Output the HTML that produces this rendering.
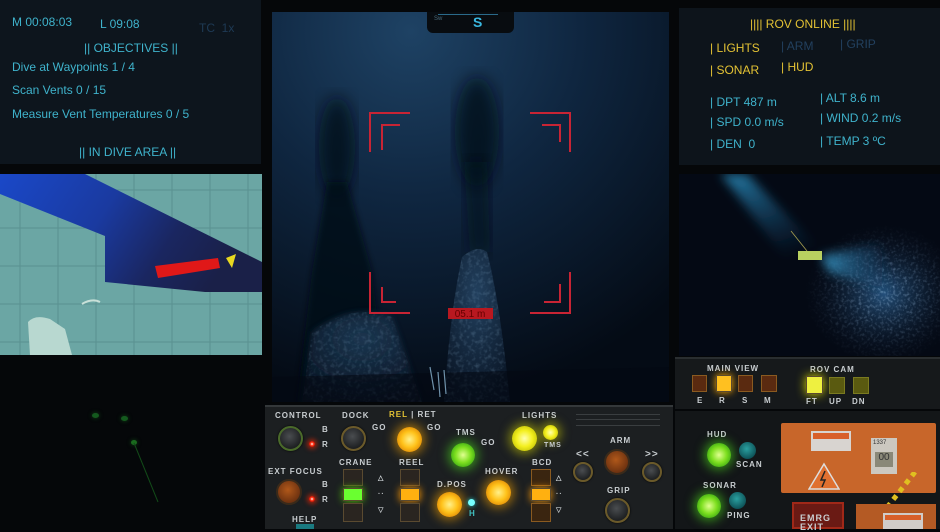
<!DOCTYPE html>
<html><head><meta charset="utf-8"><style>
*{margin:0;padding:0;box-sizing:border-box}
body{width:940px;height:529px;background:#050709;position:relative;overflow:hidden;font-family:"Liberation Sans",sans-serif}
.a{position:absolute;white-space:nowrap}
.c{color:#3fb3cc;font-size:12px}
.y{color:#e3c234;font-size:12px}
.d{color:#22405e;font-size:12px}
.l{color:#c8cdd0;font-size:8px;font-weight:bold;letter-spacing:1px}
.k{position:absolute;border-radius:50%}
.knob{background:radial-gradient(circle at 45% 40%,#4a4d50,#1e2022 70%);border:2px solid #6b5a2a;box-shadow:0 0 2px #000}
.org{background:radial-gradient(circle,#fff08a 0,#ffc21a 45%,#d87a00 90%);box-shadow:0 0 10px 3px rgba(255,170,0,.55)}
.yel{background:radial-gradient(circle,#ffffb0 0,#f4f020 45%,#b8b800 90%);box-shadow:0 0 10px 3px rgba(230,230,0,.5)}
.grn{background:radial-gradient(circle,#e0ff90 0,#7ee020 45%,#2a9a10 90%);box-shadow:0 0 10px 3px rgba(80,230,30,.55)}
.brn{background:radial-gradient(circle at 45% 40%,#b0581a,#6a3010 75%);border:2px solid #3a2a1a}
.tel{background:radial-gradient(circle at 45% 40%,#2aa0a0,#0b4a50 80%)}
.red{background:radial-gradient(circle,#fff,#ff3010 40%,#a00 90%);box-shadow:0 0 5px 2px rgba(255,40,0,.6)}
.sq{position:absolute;border:1px solid #5a4a30;background:#2a2520}
</style></head><body>

<div class="a" style="left:0;top:0;width:261px;height:164px;background:#0d151d"></div>
<div class="a c" style="left:12px;top:15px">M 00:08:03</div>
<div class="a c" style="left:100px;top:17px">L 09:08</div>
<div class="a d" style="left:199px;top:21px;color:#1e3a55">TC &nbsp;1x</div>
<div class="a c" style="left:84px;top:41px">|| OBJECTIVES ||</div>
<div class="a c" style="left:12px;top:60px">Dive at Waypoints 1 / 4</div>
<div class="a c" style="left:12px;top:83px">Scan Vents 0 / 15</div>
<div class="a c" style="left:12px;top:107px">Measure Vent Temperatures 0 / 5</div>
<div class="a c" style="left:79px;top:145px">|| IN DIVE AREA ||</div>

<svg class="a" style="left:0;top:174px" width="262" height="181">
<rect width="262" height="181" fill="#6ba6a4"/>
<g stroke="#5a9090" stroke-width="1">
<line x1="20" y1="0" x2="20" y2="181"/><line x1="58" y1="0" x2="58" y2="181"/><line x1="96" y1="0" x2="96" y2="181"/><line x1="134" y1="0" x2="134" y2="181"/><line x1="172" y1="0" x2="172" y2="181"/><line x1="210" y1="0" x2="210" y2="181"/><line x1="248" y1="0" x2="248" y2="181"/>
<line x1="0" y1="16" x2="262" y2="16"/><line x1="0" y1="54" x2="262" y2="54"/><line x1="0" y1="92" x2="262" y2="92"/><line x1="0" y1="130" x2="262" y2="130"/><line x1="0" y1="168" x2="262" y2="168"/>
</g>
<defs><linearGradient id="bl" x1="0" y1="0" x2="1" y2="0.3"><stop offset="0" stop-color="#1a48c8"/><stop offset=".45" stop-color="#1a3aa0"/><stop offset=".75" stop-color="#1a2660"/><stop offset="1" stop-color="#1a2048"/></linearGradient></defs>
<polygon points="0,0 85,0 262,88 262,118 205,118 105,108 105,62 0,20" fill="url(#bl)"/>
<polygon points="155,92 218,84 220,94 158,104" fill="#e01818"/>
<polygon points="226,84 236,80 232,94" fill="#e8d820"/>
<path d="M28,148 Q35,140 50,145 L65,155 L72,181 L30,181 Z" fill="#b8d8d0"/>
<path d="M82,130 Q92,124 100,128" stroke="#c8e0d8" stroke-width="2" fill="none"/>
</svg>

<div class="k" style="left:92px;top:413px;width:7px;height:5px;background:#145a1e;box-shadow:0 0 4px #124a18"></div>
<div class="k" style="left:121px;top:416px;width:7px;height:5px;background:#145a1e;box-shadow:0 0 4px #124a18"></div>
<div class="k" style="left:131px;top:440px;width:6px;height:5px;background:#1a6a1e;box-shadow:0 0 4px #124a18"></div>
<svg class="a" style="left:0;top:0" width="270" height="529"><line x1="134" y1="443" x2="158" y2="502" stroke="#124a18" stroke-width="1"/></svg>

<svg class="a" style="left:272px;top:12px" width="397" height="390">
<defs>
<radialGradient id="cg" cx=".35" cy=".05" r=".95"><stop offset="0" stop-color="#1e4264"/><stop offset=".45" stop-color="#0f2640"/><stop offset="1" stop-color="#040b15"/></radialGradient>
<radialGradient id="rk" cx=".5" cy=".3" r=".7"><stop offset="0" stop-color="#22405e"/><stop offset="1" stop-color="#0a1626"/></radialGradient>
<filter id="bf"><feGaussianBlur stdDeviation="8"/></filter>
<filter id="bs"><feGaussianBlur stdDeviation="3"/></filter>
<filter id="tx"><feTurbulence type="fractalNoise" baseFrequency=".25" numOctaves="2" result="n"/><feColorMatrix in="n" type="matrix" values="0 0 0 0 .3  0 0 0 0 .5  0 0 0 0 .7  0 0 0 1.6 -0.75"/><feComposite in2="SourceGraphic" operator="in"/></filter>
</defs>
<rect width="397" height="390" fill="url(#cg)"/>
<ellipse cx="65" cy="135" rx="18" ry="50" fill="#060e18" opacity=".75" filter="url(#bf)"/>
<ellipse cx="205" cy="120" rx="22" ry="55" fill="#060e18" opacity=".75" filter="url(#bf)"/>
<path d="M55,170 L75,170 L100,260 L115,390 L25,390 L40,260 Z" fill="#050b14" opacity=".8" filter="url(#bs)"/>
<path d="M192,150 L215,150 L218,240 L198,240 Z" fill="#060d18" opacity=".6" filter="url(#bf)"/>
<path d="M40,320 Q80,290 120,305 L150,390 L30,390 Z" fill="url(#rk)" opacity=".8" filter="url(#bs)"/>
<path d="M40,320 Q80,290 120,305 L150,390 L30,390 Z" filter="url(#tx)" fill="#fff" opacity=".3"/>
<path d="M190,245 Q205,232 215,240 Q228,290 238,390 L172,390 Q178,300 190,245 Z" fill="url(#rk)"/>
<path d="M190,245 Q205,232 215,240 Q228,290 238,390 L172,390 Q178,300 190,245 Z" filter="url(#tx)" fill="#fff" opacity=".35"/>
<path d="M0,365 L397,355 L397,390 L0,390 Z" fill="#040912" opacity=".6"/>
<g stroke="#8ab4d0" stroke-width="1.2" opacity=".8"><line x1="158" y1="355" x2="162" y2="378"/><line x1="166" y1="360" x2="168" y2="385"/><line x1="172" y1="358" x2="174" y2="382"/></g>
<g stroke="#c82434" stroke-width="2" fill="none">
<path d="M98,140 V101 H138"/><path d="M110,138 V113 H128"/>
<path d="M258,101 H298 V140"/><path d="M270,113 H288 V130"/>
<path d="M98,260 V301 H138"/><path d="M110,275 V290 H124"/>
<path d="M298,260 V301 H258"/><path d="M288,272 V290 H272"/>
</g>
<rect x="176" y="296" width="45" height="11" fill="#b81820"/>
<text x="198" y="305" font-family="Liberation Sans" font-size="10" fill="#600" text-anchor="middle">05.1 m</text>
</svg>
<div class="a" style="left:427px;top:12px;width:87px;height:21px;background:#080c10;border-radius:0 0 6px 6px"></div>
<div class="a" style="left:438px;top:14px;width:60px;height:1px;background:#2a6a8a"></div>
<div class="a" style="left:434px;top:16px;font-size:6px;color:#4a6a7a">Sw</div>
<div class="a" style="left:473px;top:14px;font-size:14px;font-weight:bold;color:#3ab8e0">S</div>

<div class="a" style="left:679px;top:8px;width:261px;height:157px;background:#0d141b"></div>
<div class="a y" style="left:750px;top:17px">|||| ROV ONLINE ||||</div>
<div class="a y" style="left:710px;top:41px">| LIGHTS</div>
<div class="a d" style="left:781px;top:39px">| ARM</div>
<div class="a d" style="left:840px;top:37px">| GRIP</div>
<div class="a y" style="left:710px;top:63px">| SONAR</div>
<div class="a y" style="left:781px;top:60px">| HUD</div>
<div class="a c" style="left:710px;top:95px">| DPT 487 m</div>
<div class="a c" style="left:820px;top:91px">| ALT 8.6 m</div>
<div class="a c" style="left:710px;top:115px">| SPD 0.0 m/s</div>
<div class="a c" style="left:820px;top:111px">| WIND 0.2 m/s</div>
<div class="a c" style="left:710px;top:137px">| DEN &nbsp;0</div>
<div class="a c" style="left:820px;top:134px">| TEMP 3 ºC</div>

<svg class="a" style="left:679px;top:174px" width="261" height="182">
<defs>
<linearGradient id="bm1" x1="0" y1="0" x2="0.4" y2="1"><stop offset="0" stop-color="#2a90c0" stop-opacity=".85"/><stop offset="1" stop-color="#1a5a8a" stop-opacity="0"/></linearGradient>
<linearGradient id="bm2" x1="0" y1="0" x2="1" y2="0"><stop offset="0" stop-color="#3aa0d0" stop-opacity=".9"/><stop offset="1" stop-color="#1a4a7a" stop-opacity="0"/></linearGradient>
<radialGradient id="sf" cx=".5" cy=".5" r=".5"><stop offset="0" stop-color="#24507a"/><stop offset="1" stop-color="#08101e" stop-opacity="0"/></radialGradient>
<radialGradient id="mg" cx=".5" cy=".5" r=".5"><stop offset="0" stop-color="#fff"/><stop offset="1" stop-color="#000"/></radialGradient>
<mask id="mk"><ellipse cx="205" cy="120" rx="80" ry="70" fill="url(#mg)"/></mask>
<filter id="b2"><feGaussianBlur stdDeviation="5"/></filter>
<filter id="tx2"><feTurbulence type="fractalNoise" baseFrequency=".35" numOctaves="2" result="n"/><feColorMatrix in="n" type="matrix" values="0 0 0 0 .4  0 0 0 0 .6  0 0 0 0 .85  0 0 0 1.8 -0.85"/><feComposite in2="SourceGraphic" operator="in"/></filter>
</defs>
<rect width="261" height="182" fill="#040914"/>
<polygon points="42,0 68,0 150,85 112,92" fill="url(#bm1)" filter="url(#b2)"/>
<ellipse cx="205" cy="120" rx="80" ry="70" fill="url(#sf)"/>
<rect x="120" y="50" width="141" height="132" fill="#fff" filter="url(#tx2)" mask="url(#mk)" opacity=".7"/>
<polygon points="142,82 200,70 215,118 150,98" fill="url(#bm2)" filter="url(#b2)"/>
<line x1="112" y1="57" x2="128" y2="77" stroke="#a8a050" stroke-width=".8"/>
<rect x="119" y="77" width="24" height="9" fill="#b8d060"/>
</svg>

<div class="a" style="left:265px;top:405px;width:408px;height:124px;background:#1c1f21;border-top:2px solid #34383a"></div>
<div class="a l" style="left:275px;top:411px">CONTROL</div>
<div class="k knob" style="left:278px;top:426px;width:25px;height:25px;border-color:#4a6a2a"></div>
<div class="a l" style="left:322px;top:425px">B</div><div class="a l" style="left:322px;top:440px">R</div>
<div class="k red" style="left:309px;top:441px;width:6px;height:6px"></div>
<div class="a l" style="left:342px;top:411px">DOCK</div>
<div class="k knob" style="left:341px;top:426px;width:25px;height:25px"></div>
<div class="a l" style="left:372px;top:423px">GO</div>
<div class="a y" style="left:389px;top:410px;font-size:8px;font-weight:bold;letter-spacing:1px">REL <span style="color:#c8cdd0">| RET</span></div>
<div class="k org" style="left:397px;top:427px;width:25px;height:25px"></div>
<div class="a l" style="left:427px;top:423px">GO</div>
<div class="a l" style="left:456px;top:428px">TMS</div>
<div class="k grn" style="left:451px;top:443px;width:24px;height:24px"></div>
<div class="a l" style="left:481px;top:438px">GO</div>
<div class="a l" style="left:522px;top:411px">LIGHTS</div>
<div class="k yel" style="left:512px;top:426px;width:25px;height:25px"></div>
<div class="k yel" style="left:543px;top:425px;width:15px;height:15px"></div>
<div class="a l" style="left:544px;top:442px;font-size:7px">TMS</div>
<div class="a" style="left:576px;top:414px;width:84px;height:12px;border-top:1px solid #3a3e40;border-bottom:1px solid #3a3e40"></div>
<div class="a" style="left:576px;top:419px;width:84px;height:1px;background:#3a3e40"></div>
<div class="a l" style="left:610px;top:436px">ARM</div>
<div class="k brn" style="left:604px;top:449px;width:26px;height:26px"></div>
<div class="a l" style="left:576px;top:449px;font-size:10px">&lt;&lt;</div>
<div class="k knob" style="left:573px;top:462px;width:20px;height:20px"></div>
<div class="a l" style="left:645px;top:449px;font-size:10px">&gt;&gt;</div>
<div class="k knob" style="left:642px;top:462px;width:20px;height:20px"></div>
<div class="a l" style="left:607px;top:486px">GRIP</div>
<div class="k knob" style="left:605px;top:498px;width:25px;height:25px"></div>
<div class="a l" style="left:268px;top:467px">EXT FOCUS</div>
<div class="k brn" style="left:276px;top:479px;width:26px;height:26px"></div>
<div class="a l" style="left:322px;top:480px">B</div><div class="a l" style="left:322px;top:495px">R</div>
<div class="k red" style="left:309px;top:496px;width:6px;height:6px"></div>
<div class="a l" style="left:292px;top:515px">HELP</div>
<div class="a" style="left:296px;top:524px;width:18px;height:5px;background:#1a7a80"></div>
<div class="a l" style="left:339px;top:458px">CRANE</div>
<div class="sq" style="left:343px;top:469px;width:20px;height:17px"></div>
<div class="sq" style="left:343px;top:488px;width:20px;height:13px;background:#6aff30;box-shadow:0 0 8px #5c0"></div>
<div class="sq" style="left:343px;top:503px;width:20px;height:19px"></div>
<div class="a l" style="left:378px;top:474px;font-size:7px">△</div>
<div class="a l" style="left:378px;top:491px;font-size:7px">··</div>
<div class="a l" style="left:378px;top:506px;font-size:7px">▽</div>
<div class="a l" style="left:399px;top:458px">REEL</div>
<div class="sq" style="left:400px;top:469px;width:20px;height:17px"></div>
<div class="sq" style="left:400px;top:488px;width:20px;height:13px;background:#ffb010;box-shadow:0 0 8px #f90"></div>
<div class="sq" style="left:400px;top:503px;width:20px;height:19px"></div>
<div class="a l" style="left:437px;top:480px">D.POS</div>
<div class="k org" style="left:437px;top:492px;width:25px;height:25px"></div>
<div class="k" style="left:468px;top:499px;width:7px;height:7px;background:#7ff;box-shadow:0 0 5px #2cc"></div>
<div class="a l" style="left:469px;top:509px;color:#40c0c0">H</div>
<div class="a l" style="left:485px;top:467px">HOVER</div>
<div class="k org" style="left:486px;top:480px;width:25px;height:25px"></div>
<div class="a l" style="left:532px;top:458px">BCD</div>
<div class="sq" style="left:531px;top:469px;width:20px;height:17px;border-color:#8a5a20;background:#3a2510"></div>
<div class="sq" style="left:531px;top:488px;width:20px;height:13px;background:#ffb010;box-shadow:0 0 8px #f90"></div>
<div class="sq" style="left:531px;top:503px;width:20px;height:19px;border-color:#8a5a20;background:#3a2510"></div>
<div class="a l" style="left:556px;top:474px;font-size:7px">△</div>
<div class="a l" style="left:556px;top:491px;font-size:7px">··</div>
<div class="a l" style="left:556px;top:506px;font-size:7px">▽</div>

<div class="a" style="left:675px;top:357px;width:265px;height:52px;background:#16191b;border-top:2px solid #2a2e30"></div>
<div class="a" style="left:675px;top:411px;width:265px;height:118px;background:#131618"></div>
<div class="a l" style="left:707px;top:364px">MAIN VIEW</div>
<div class="sq" style="left:692px;top:375px;width:15px;height:17px;background:#5a2a10;border-color:#8a5a20"></div>
<div class="sq" style="left:716px;top:375px;width:16px;height:17px;background:#ffc020;box-shadow:0 0 8px #fa0"></div>
<div class="sq" style="left:738px;top:375px;width:15px;height:17px;background:#5a2a10;border-color:#8a5a20"></div>
<div class="sq" style="left:761px;top:375px;width:16px;height:17px;background:#5a2a10;border-color:#8a5a20"></div>
<div class="a l" style="left:697px;top:396px">E</div><div class="a l" style="left:719px;top:396px">R</div><div class="a l" style="left:742px;top:396px">S</div><div class="a l" style="left:764px;top:396px">M</div>
<div class="a l" style="left:810px;top:365px">ROV CAM</div>
<div class="sq" style="left:806px;top:376px;width:17px;height:18px;background:#eef040;box-shadow:0 0 10px #dd0"></div>
<div class="sq" style="left:829px;top:377px;width:16px;height:17px;background:#5a5a10;border-color:#7a7a20"></div>
<div class="sq" style="left:853px;top:377px;width:16px;height:17px;background:#5a5a10;border-color:#7a7a20"></div>
<div class="a l" style="left:806px;top:397px">FT</div><div class="a l" style="left:829px;top:397px">UP</div><div class="a l" style="left:852px;top:397px">DN</div>
<div class="a l" style="left:707px;top:430px">HUD</div>
<div class="k grn" style="left:707px;top:443px;width:24px;height:24px"></div>
<div class="k tel" style="left:739px;top:442px;width:17px;height:17px"></div>
<div class="a l" style="left:736px;top:460px">SCAN</div>
<div class="a l" style="left:703px;top:481px">SONAR</div>
<div class="k grn" style="left:697px;top:494px;width:24px;height:24px"></div>
<div class="k tel" style="left:729px;top:492px;width:17px;height:17px"></div>
<div class="a l" style="left:727px;top:511px">PING</div>
<div class="a" style="left:781px;top:423px;width:155px;height:70px;background:#c8662a;border-radius:2px"></div>
<div class="a" style="left:811px;top:431px;width:40px;height:20px;background:#d8d4d0"></div>
<div class="a" style="left:813px;top:433px;width:36px;height:6px;background:#d8602a"></div>
<div class="a" style="left:871px;top:438px;width:26px;height:36px;background:#ccc8c0"></div>
<div class="a" style="left:873px;top:440px;font-size:6px;color:#333">1337</div>
<div class="a" style="left:875px;top:452px;width:18px;height:15px;background:#8a8878;font-size:10px;color:#333;text-align:center">00</div>
<svg class="a" style="left:808px;top:462px" width="32" height="28"><polygon points="16,2 31,27 1,27" fill="#e07030" stroke="#ddd" stroke-width="1.5"/><path d="M17,9 L13,18 L17,18 L14,25" stroke="#222" stroke-width="1.5" fill="none"/></svg>
<svg class="a" style="left:870px;top:472px" width="50" height="57"><g stroke="#e0c020" stroke-width="5"><line x1="45" y1="0" x2="0" y2="57" stroke-dasharray="5,5"/></g></svg>
<div class="a" style="left:792px;top:502px;width:52px;height:27px;background:#6a1a14;border:2px solid #a02818"></div>
<div class="a l" style="left:800px;top:514px;font-size:9px;line-height:9px">EMRG<br>EXIT</div>
<div class="a" style="left:856px;top:504px;width:80px;height:25px;background:#b45a24"></div>
<div class="a" style="left:883px;top:513px;width:40px;height:16px;background:#d0ccc8"></div>
<div class="a" style="left:885px;top:515px;width:36px;height:5px;background:#d8602a"></div>
</body></html>
